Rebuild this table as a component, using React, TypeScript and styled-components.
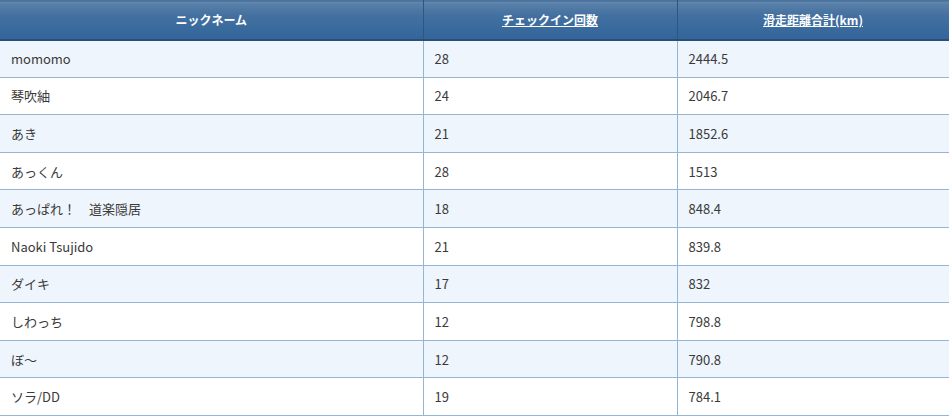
import React from "react";
import styled, { createGlobalStyle } from "styled-components";

const Global = createGlobalStyle`
  html, body { margin: 0; padding: 0; background: #ffffff; }
  body { font-family: "Noto Sans CJK JP", "DejaVu Sans", sans-serif; }
`;

const Table = styled.table`
  width: 949px;
  border-collapse: collapse;
  table-layout: fixed;
  font-size: 13px;
  color: #3a3a3a;
`;

const HeadCell = styled.th<{ $link?: boolean }>`
  height: 39px;
  padding: 0;
  box-sizing: border-box;
  background: linear-gradient(#6a8db3 0px, #5a80a8 2px, #4370a0 14px, #32659a 38px);
  border-left: 1px solid #2d5783;
  border-right: 1px solid #2d5783;
  border-top: 1px solid #4b729b;
  border-bottom: 2px solid #284f7a;
  color: #ffffff;
  font-weight: bold;
  font-size: 12px;
  text-align: center;
  text-decoration: ${(p) => (p.$link ? "underline" : "none")};
  &:first-child { border-left: none; }
`;

const Row = styled.tr<{ $alt: boolean }>`
  background: ${(p) => (p.$alt ? "#eff5fc" : "#ffffff")};
`;

const Cell = styled.td`
  height: 37.6px;
  padding: 0 0 0 11px;
  box-sizing: border-box;
  border: 1px solid #94b6d4;
  white-space: pre;
  &:first-child { border-left: none; }
`;

const rows: [string, string, string][] = [
  ["momomo", "28", "2444.5"],
  ["琴吹紬", "24", "2046.7"],
  ["あき", "21", "1852.6"],
  ["あっくん", "28", "1513"],
  ["あっぱれ！　道楽隠居", "18", "848.4"],
  ["Naoki Tsujido", "21", "839.8"],
  ["ダイキ", "17", "832"],
  ["しわっち", "12", "798.8"],
  ["ぼ～", "12", "790.8"],
  ["ソラ/DD", "19", "784.1"],
];

export default function App() {
  return (
    <>
      <Global />
      <Table>
        <colgroup>
          <col style={{ width: 423 }} />
          <col style={{ width: 254 }} />
          <col style={{ width: 272 }} />
        </colgroup>
        <thead>
          <tr>
            <HeadCell>ニックネーム</HeadCell>
            <HeadCell $link>チェックイン回数</HeadCell>
            <HeadCell $link>滑走距離合計(km)</HeadCell>
          </tr>
        </thead>
        <tbody>
          {rows.map((r, i) => (
            <Row key={i} $alt={i % 2 === 0}>
              <Cell>{r[0]}</Cell>
              <Cell>{r[1]}</Cell>
              <Cell>{r[2]}</Cell>
            </Row>
          ))}
        </tbody>
      </Table>
    </>
  );
}
